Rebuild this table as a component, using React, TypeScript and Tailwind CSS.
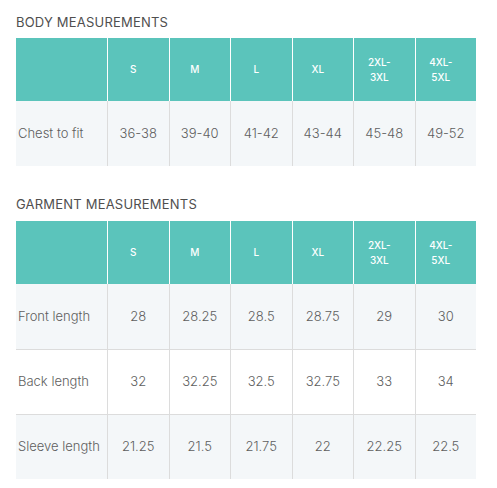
import React from "react";

const sizes: React.ReactNode[] = [
  "S",
  "M",
  "L",
  "XL",
  <>
    2XL-
    <br />
    3XL
  </>,
  <>
    4XL-
    <br />
    5XL
  </>,
];

type Row = { label: string; values: string[] };

function SizeTable({ rows }: { rows: Row[] }) {
  return (
    <div className="w-[460px]">
      <div className="grid grid-cols-[91px_repeat(6,minmax(0,1fr))] h-[63px] bg-[#5bc4bb] text-white text-[10px] font-medium leading-[15px]">
        <div />
        {sizes.map((s, i) => (
          <div
            key={i}
            className="border-l border-white flex items-center justify-center text-center pr-[10px]"
          >
            <span>{s}</span>
          </div>
        ))}
      </div>
      {rows.map((r, ri) => (
        <div
          key={r.label}
          className={`grid grid-cols-[91px_repeat(6,minmax(0,1fr))] h-[65px] text-[13px] font-light text-[#5e5e5e] ${
            ri % 2 === 0 ? "bg-[#f4f7f9]" : "bg-white"
          } ${ri > 0 ? "border-t border-[#dcdcdc]" : ""}`}
        >
          <div className="flex items-center pl-[2px] whitespace-nowrap">{r.label}</div>
          {r.values.map((v, i) => (
            <div
              key={i}
              className="border-l border-[#dcdcdc] flex items-center justify-center"
            >
              {v}
            </div>
          ))}
        </div>
      ))}
    </div>
  );
}

export default function App() {
  return (
    <div
      className="w-[497px] h-[488px] bg-white px-4 pt-[13px]"
      style={{ fontFamily: "Inter, 'Open Sans', sans-serif" }}
    >
      <h2 className="text-[13px] leading-[18px] text-[#4f4f4f] tracking-[0.2px] mb-[7px]">
        BODY MEASUREMENTS
      </h2>
      <SizeTable rows={[{ label: "Chest to fit", values: ["36-38", "39-40", "41-42", "43-44", "45-48", "49-52"] }]} />
      <h2 className="text-[13px] leading-[18px] text-[#4f4f4f] tracking-[0.2px] mt-[29px] mb-[8px]">
        GARMENT MEASUREMENTS
      </h2>
      <SizeTable
        rows={[
          { label: "Front length", values: ["28", "28.25", "28.5", "28.75", "29", "30"] },
          { label: "Back length", values: ["32", "32.25", "32.5", "32.75", "33", "34"] },
          { label: "Sleeve length", values: ["21.25", "21.5", "21.75", "22", "22.25", "22.5"] },
        ]}
      />
    </div>
  );
}
